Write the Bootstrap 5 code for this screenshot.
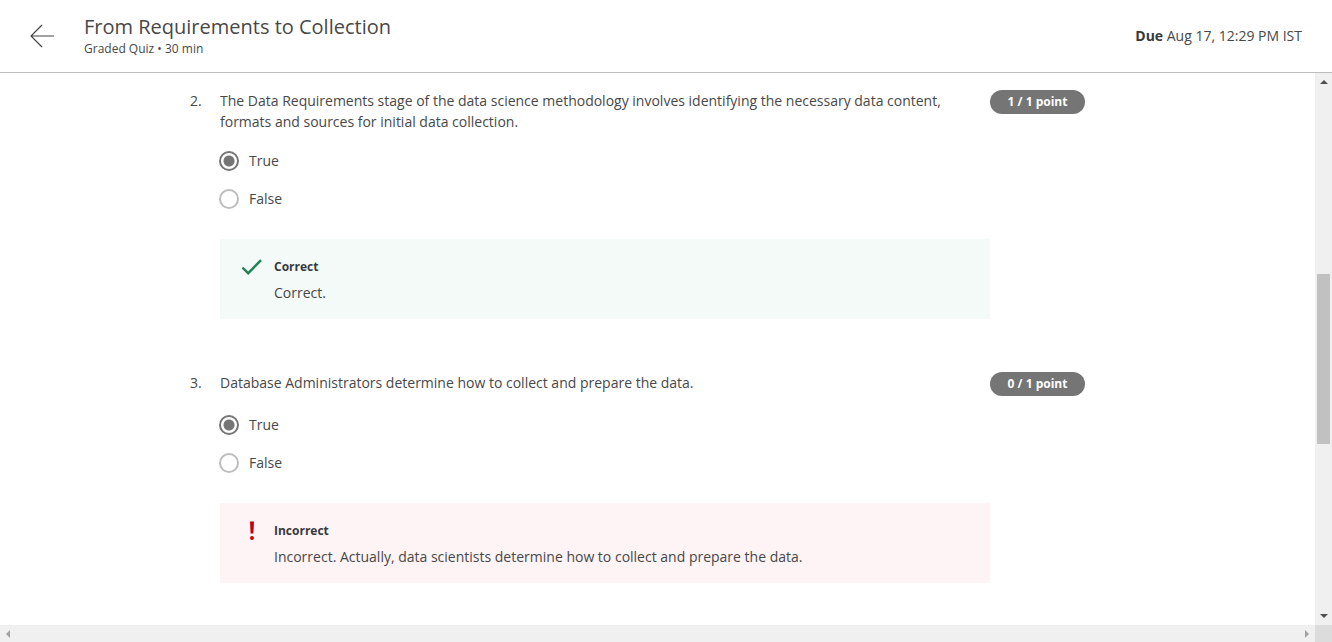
<!DOCTYPE html>
<html lang="en">
<head>
<meta charset="utf-8">
<meta name="viewport" content="width=device-width, initial-scale=1">
<title>From Requirements to Collection</title>
<link href="https://cdn.jsdelivr.net/npm/bootstrap@5.3.0/dist/css/bootstrap.min.css" rel="stylesheet">
<style>
  body { font-family: "Open Sans", sans-serif; font-size: 14px; line-height: 21px; color: #484848; background: #fff; }
  strong, .feedback-title { color: #373a3c; }
  .quiz-header { min-height: 73px; padding: 0 30px; border-bottom: 1px solid #bdbdbd; }
  .back-link { width: 24px; margin-right: 30px; }
  .quiz-title { font-size: 20px; line-height: 24px; font-weight: 400; padding-top: 2px; }
  .quiz-meta { font-size: 12px; line-height: 20px; }
  .due-date, .option label { line-height: 20px; }
  .quiz-page { max-width: 935px; padding: 17px 40px 0 0; }
  .question { margin-bottom: 53px; }
  .question-number { width: 30px; }
  .question-body { width: 770px; }
  .prompt { min-height: 24px; margin-bottom: 10px; padding-right: 30px; }
  .option { height: 38px; gap: 10px; padding: 0; margin: 0; }
  .option .form-check-input { width: 20px; height: 20px; margin: 0 0 0 -1px; float: none; border: 2px solid #bdbdbd; background: #fff; box-shadow: none; }
  .option .form-check-input:checked { border-color: #757575; background: radial-gradient(circle, #757575 5px, #fff 6px); }
  .feedback { min-height: 80px; margin-top: 21px; padding: 18px 22px 16px; }
  .feedback-good { background: #f4faf8; }
  .feedback-bad { background: #fef3f5; }
  .feedback-icon { width: 20px; height: 20px; margin-right: 12px; }
  .feedback-title { font-size: 12px; line-height: 20px; font-weight: 700; margin-bottom: 6px; }
  .feedback-text { line-height: 20px; }
  .score { width: 95px; height: 24px; background: #757575; font-size: 12px; line-height: 24px; font-weight: 700; }
  .bar { background: #f0f0f0; }
  .bar-v { width: 17px; }
  .bar-h { height: 17px; padding-left: 4px; }
  .bar-corner { width: 17px; background: #dcdcdc; }
  .bar-thumb { width: 13px; background: #c1c1c1; flex: 0 0 170px; }
  .bar-before { flex: 0 0 184px; }
</style>
</head>
<body class="vh-100 d-flex flex-column overflow-hidden">
<header class="quiz-header d-flex align-items-center flex-shrink-0">
  <a class="back-link d-flex" href="#" aria-label="Back">
    <svg width="24" height="24" viewBox="0 0 24 24" fill="none" stroke="#444" stroke-width="1.2"><path d="M12 1 1 12l11 11M1 12h23"/></svg>
  </a>
  <div class="flex-grow-1">
    <h1 class="quiz-title m-0">From Requirements to Collection</h1>
    <div class="quiz-meta">Graded Quiz • 30 min</div>
  </div>
  <div class="due-date"><strong>Due</strong> Aug 17, 12:29 PM IST</div>
</header>

<div class="d-flex flex-grow-1 overflow-hidden">
  <main class="flex-grow-1 overflow-hidden">
    <form class="quiz-page mx-auto">
      <section class="question d-flex">
        <div class="question-number flex-shrink-0">2.</div>
        <div class="question-body">
          <div class="prompt" id="q2">The Data Requirements stage of the data science methodology involves identifying the necessary data content, formats and sources for initial data collection.</div>
          <div role="radiogroup" aria-labelledby="q2">
            <div class="option form-check d-flex align-items-center">
              <input class="form-check-input" type="radio" name="q2" id="q2-true" checked>
              <label for="q2-true">True</label>
            </div>
            <div class="option form-check d-flex align-items-center">
              <input class="form-check-input" type="radio" name="q2" id="q2-false">
              <label for="q2-false">False</label>
            </div>
          </div>
          <div class="feedback feedback-good d-flex">
            <svg class="feedback-icon" viewBox="0 0 20 20" fill="none" stroke="#1f8354" stroke-width="2.4"><path d="M.4 10.500 6.200 16.200 19 3.200"/></svg>
            <div>
              <div class="feedback-title">Correct</div>
              <div class="feedback-text">Correct.</div>
            </div>
          </div>
        </div>
        <div class="score flex-shrink-0 rounded-pill text-white text-center">1 / 1 point</div>
      </section>

      <section class="question d-flex">
        <div class="question-number flex-shrink-0">3.</div>
        <div class="question-body">
          <div class="prompt" id="q3">Database Administrators determine how to collect and prepare the data.</div>
          <div role="radiogroup" aria-labelledby="q3">
            <div class="option form-check d-flex align-items-center">
              <input class="form-check-input" type="radio" name="q3" id="q3-true" checked>
              <label for="q3-true">True</label>
            </div>
            <div class="option form-check d-flex align-items-center">
              <input class="form-check-input" type="radio" name="q3" id="q3-false">
              <label for="q3-false">False</label>
            </div>
          </div>
          <div class="feedback feedback-bad d-flex">
            <svg class="feedback-icon" viewBox="0 0 20 20" fill="#c7000b"><path d="M8 .5h4l-.6 12H8.600z"/><circle cx="10" cy="17" r="2"/></svg>
            <div>
              <div class="feedback-title">Incorrect</div>
              <div class="feedback-text">Incorrect. Actually, data scientists determine how to collect and prepare the data.</div>
            </div>
          </div>
        </div>
        <div class="score flex-shrink-0 rounded-pill text-white text-center">0 / 1 point</div>
      </section>
    </form>
  </main>
  <div class="bar bar-v d-flex flex-column align-items-center flex-shrink-0" aria-hidden="true">
    <svg class="flex-shrink-0" width="17" height="17" viewBox="0 0 17 17" fill="#505050"><path d="M5 11h8L9 7z"/></svg>
    <div class="bar-before"></div>
    <div class="bar-thumb"></div>
    <svg class="mt-auto flex-shrink-0" width="17" height="17" viewBox="0 0 17 17" fill="#505050"><path d="M5 6h8l-4 4z"/></svg>
  </div>
</div>
<div class="bar bar-h d-flex justify-content-between flex-shrink-0" aria-hidden="true">
  <svg width="9" height="17" viewBox="0 0 9 17" fill="#a3a3a3"><path d="M6 5v8L2 9z"/></svg>
  <div class="d-flex">
    <svg width="12" height="17" viewBox="0 0 12 17" fill="#a3a3a3"><path d="M2 5v8l4-4z"/></svg>
    <div class="bar-corner"></div>
  </div>
</div>
<script src="https://cdn.jsdelivr.net/npm/bootstrap@5.3.0/dist/js/bootstrap.bundle.min.js"></script>
</body>
</html>
